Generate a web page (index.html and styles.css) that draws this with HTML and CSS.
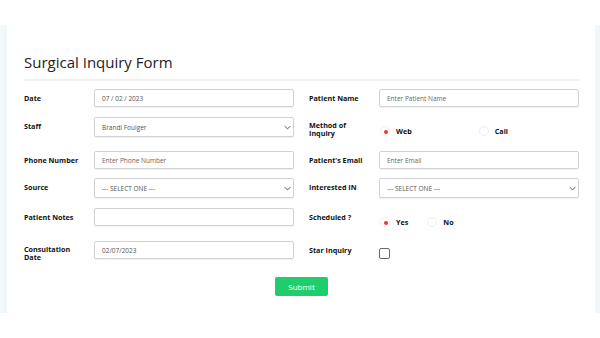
FILE: index.html
```html
<!DOCTYPE html>
<html lang="en">
<head>
  <meta charset="UTF-8">
  <meta name="viewport" content="width=device-width, initial-scale=1.0">
  <title>Surgical Inquiry Form</title>
  <link rel="stylesheet" href="styles.css">
</head>
<body>
  <div class="page">
    <div class="card">
      <h1 class="title">Surgical Inquiry Form</h1>

      <form class="form">
        <div class="row row-1">
          <div class="group">
            <label class="label">Date</label>
            <input class="field" type="text" value="07 / 02 / 2023">
          </div>
          <div class="group">
            <label class="label">Patient Name</label>
            <input class="field" type="text" placeholder="Enter Patient Name">
          </div>
        </div>

        <div class="row row-2">
          <div class="group">
            <label class="label">Staff</label>
            <div class="select-wrap">
              <select class="field select">
                <option>Brandi Foulger</option>
              </select>
              <svg class="chevron" viewBox="0 0 10 6" width="7" height="5"><path d="M1 1l4 4 4-4" fill="none" stroke="#444" stroke-width="1.3"/></svg>
            </div>
          </div>
          <div class="group">
            <label class="label two-line">Method of Inquiry</label>
            <div class="choices">
              <span class="choice wide"><span class="radio checked"></span>Web</span>
              <span class="choice"><span class="radio"></span>Call</span>
            </div>
          </div>
        </div>

        <div class="row row-3">
          <div class="group">
            <label class="label">Phone Number</label>
            <input class="field" type="text" placeholder="Enter Phone Number">
          </div>
          <div class="group">
            <label class="label">Patient's Email</label>
            <input class="field" type="text" placeholder="Enter Email">
          </div>
        </div>

        <div class="row row-4">
          <div class="group">
            <label class="label">Source</label>
            <div class="select-wrap">
              <select class="field select">
                <option>--- SELECT ONE ---</option>
              </select>
              <svg class="chevron" viewBox="0 0 10 6" width="7" height="5"><path d="M1 1l4 4 4-4" fill="none" stroke="#444" stroke-width="1.3"/></svg>
            </div>
          </div>
          <div class="group">
            <label class="label">Interested IN</label>
            <div class="select-wrap">
              <select class="field select">
                <option>--- SELECT ONE ---</option>
              </select>
              <svg class="chevron" viewBox="0 0 10 6" width="7" height="5"><path d="M1 1l4 4 4-4" fill="none" stroke="#444" stroke-width="1.3"/></svg>
            </div>
          </div>
        </div>

        <div class="row row-5">
          <div class="group">
            <label class="label">Patient Notes</label>
            <input class="field" type="text">
          </div>
          <div class="group">
            <label class="label">Scheduled ?</label>
            <div class="choices">
              <span class="choice"><span class="radio checked"></span>Yes</span>
              <span class="choice"><span class="radio"></span>No</span>
            </div>
          </div>
        </div>

        <div class="row row-6">
          <div class="group">
            <label class="label two-line">Consultation Date</label>
            <input class="field" type="text" value="02/07/2023">
          </div>
          <div class="group">
            <label class="label">Star Inquiry</label>
            <span class="checkbox"></span>
          </div>
        </div>

        <div class="actions">
          <button class="button" type="button">Submit</button>
        </div>
      </form>
    </div>
  </div>
</body>
</html>
```

FILE: styles.css
```css
body {
  font-family: "Open Sans", "Liberation Sans", sans-serif;
  margin: 0;
  padding: 0;
  background-color: #ffffff;
  color: #1f2937;
}

.page {
  margin-top: 25px;
  height: 288px;
  padding: 0 5px 0 7px;
  background-color: #f3f9fa;
}

.card {
  height: 100%;
  background-color: #ffffff;
  padding: 26px 16px 0 17px;
  box-sizing: border-box;
  box-shadow: 0 3px 6px rgba(120, 160, 170, 0.08);
}

.title {
  margin: 0;
  font-size: 15px;
  font-weight: 400;
  color: #222222;
  line-height: 22px;
  padding-bottom: 6px;
  border-bottom: 2px solid #f0f0f0;
}

.form {
  margin-top: 8px;
}

.row {
  display: grid;
  grid-template-columns: 1fr 1fr;
  column-gap: 15px;
}

.row-1 { margin-bottom: 10px; }
.row-2 { margin-bottom: 14px; }
.row-3 { margin-bottom: 9px; }
.row-4 { margin-bottom: 10px; }
.row-5 { margin-bottom: 14px; }
.row-6 { margin-bottom: 16px; }

.group {
  display: flex;
  align-items: flex-start;
}

.label {
  width: 70px;
  flex: none;
  font-size: 7.2px;
  font-weight: 700;
  color: #111111;
  line-height: 10px;
  padding-top: 4px;
}

.label.two-line {
  width: 56px;
  margin-right: 14px;
  line-height: 7.5px;
  padding-top: 5px;
}

.field {
  flex: 1;
  min-width: 0;
  height: 18px;
  box-sizing: border-box;
  border: 1px solid #d2d2d2;
  border-radius: 2px;
  padding: 0 7px;
  font-family: inherit;
  font-size: 6.5px;
  color: #555555;
  background-color: #ffffff;
  box-shadow: 0 1px 1px rgba(0, 0, 0, 0.06);
  outline: none;
}

.field::placeholder {
  color: #666666;
}

.select-wrap {
  flex: 1;
  position: relative;
  display: flex;
}

.select {
  height: 20px;
  width: 100%;
  -webkit-appearance: none;
  appearance: none;
}

.chevron {
  position: absolute;
  right: 3px;
  top: 8px;
}

.choices {
  display: flex;
  padding-top: 9px;
  padding-left: 1px;
}

.choice {
  display: flex;
  align-items: center;
  font-size: 7.2px;
  font-weight: 700;
  color: #111111;
  margin-right: 19px;
}

.choice.wide {
  margin-right: 67px;
}

.radio {
  width: 10px;
  height: 10px;
  border-radius: 50%;
  border: 1px solid #efefef;
  box-sizing: border-box;
  margin-right: 6px;
  position: relative;
}

.radio.checked::after {
  content: "";
  position: absolute;
  left: 2.5px;
  top: 2.5px;
  width: 4px;
  height: 4px;
  border-radius: 50%;
  background-color: #e53935;
}

.checkbox {
  width: 11px;
  height: 11px;
  box-sizing: border-box;
  border: 1.5px solid #6b6b6b;
  border-radius: 2px;
  margin-top: 7px;
}

.actions {
  display: flex;
  justify-content: center;
}

.button {
  width: 53px;
  height: 19px;
  border: none;
  border-radius: 2px;
  background-color: #1fcd6c;
  color: #ffffff;
  font-family: inherit;
  font-size: 8px;
  padding: 0;
}
```
